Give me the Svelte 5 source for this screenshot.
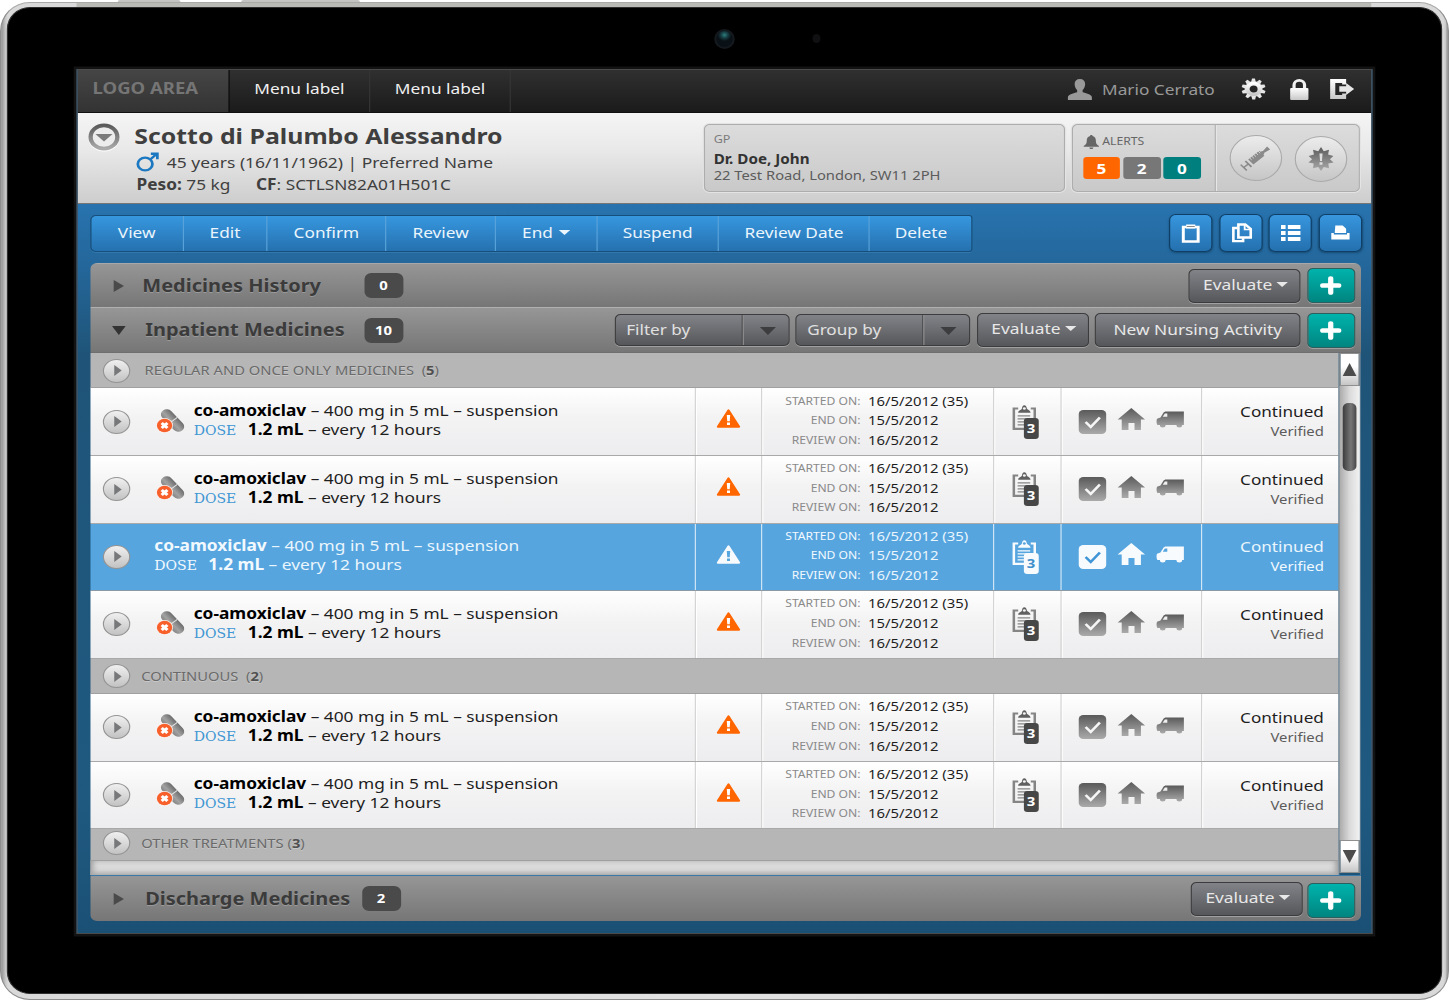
<script>
    const menu = ['Menu label', 'Menu label'];

    const actions = [
        {label: 'View', width: 81.2},
        {label: 'Edit', width: 73.5},
        {label: 'Confirm', width: 103.9},
        {label: 'Review', width: 96},
        {label: 'End', width: 88.6, caret: true},
        {label: 'Suspend', width: 106.8},
        {label: 'Review Date', width: 131.8},
        {label: 'Delete', width: 89.2},
    ];

    const alerts = [
        {count: 5, kind: 'high'},
        {count: 2, kind: 'medium'},
        {count: 0, kind: 'low'},
    ];

    const sections = [
        {title: 'REGULAR AND ONCE ONLY MEDICINES', gap: true, indent: true, count: 5, rows: [{}, {}, {selected: true}, {}]},
        {title: 'CONTINUOUS', gap: true, count: 2, rows: [{}, {}]},
        {title: 'OTHER TREATMENTS', count: 3, rows: []},
    ];

    const dates = [
        ['STARTED ON:', '16/5/2012 (35)'],
        ['END ON:', '15/5/2012'],
        ['REVIEW ON:', '16/5/2012'],
    ];
</script>

{#snippet caret()}
    <svg class="caret" width="10" height="5" viewBox="0 0 10 5"><path d="M0 0h10L5 5z"/></svg>
{/snippet}

{#snippet evaluate()}
    <button class="btn evaluate">Evaluate {@render caret()}</button>
{/snippet}

{#snippet add()}
    <button class="add" aria-label="Add">
        <svg width="19" height="19" viewBox="0 0 19 19"><path d="M9.5 2.5v14M2.5 9.5h14" stroke="#fff" stroke-width="4.6" stroke-linecap="round"/></svg>
    </button>
{/snippet}

{#snippet play()}
    <span class="play"><svg width="8" height="11" viewBox="0 0 8 11"><path d="M1 0l6.5 5.5L1 11z" fill="#77787a"/></svg></span>
{/snippet}

{#snippet select(label)}
    <div class="select">
        <span class="select-label">{label}</span>
        <span class="select-arrow"><svg width="14" height="8" viewBox="0 0 14 8"><path d="M0 0h14L7 8z" fill="#3d3d3f"/></svg></span>
    </div>
{/snippet}

<svg class="defs" width="0" height="0">
    <defs>
        <linearGradient id="grey" x1="0" y1="0" x2="0" y2="1">
            <stop offset="0" stop-color="#5a5a5a"/>
            <stop offset="1" stop-color="#aaa"/>
        </linearGradient>
        <linearGradient id="light" x1="0" y1="0" x2="0" y2="1">
            <stop offset="0" stop-color="#fff"/>
            <stop offset="1" stop-color="#c8c8c8"/>
        </linearGradient>
        <linearGradient id="pill" x1="0" y1="0" x2="1" y2="0">
            <stop offset="0" stop-color="#858585"/>
            <stop offset=".4" stop-color="#a2a2a2"/>
            <stop offset="1" stop-color="#6c6c6c"/>
        </linearGradient>
    </defs>
</svg>

<!-- laid out at 1268px and stretched sideways to fill the 1449px window -->
<div class="stage">
    <div class="keys"><i class="key power"></i><i class="key volume"></i></div>
    <div class="device">
        <div class="edge"></div>
        <div class="bezel">
            <i class="camera"></i>
            <i class="sensor"></i>
            <div class="screen">
                <nav>
                    <div class="logo">LOGO AREA</div>
                    {#each menu as item}
                        <div class="menu-item">{item}</div>
                    {/each}
                    <div class="user">
                        <svg width="22" height="21" viewBox="0 0 22 21"><path d="M11 0c3 0 4.600 2 4.600 5 0 2.600-1 4.800-2.200 6v2.200c2.800 1 7.600 1.800 8.100 4.800V21H.5v-3c.5-3 5.300-3.800 8.100-4.800V11C7.400 9.800 6.400 7.600 6.400 5c0-3 1.600-5 4.600-5z" fill="#999"/></svg>
                        <span>Mario Cerrato</span>
                    </div>
                    <svg class="gear" width="22" height="22" viewBox="0 0 22 22">
                        <circle cx="11" cy="11" r="5.600" fill="none" stroke="url(#light)" stroke-width="4.200"/>
                        <g fill="#e6e6e6">
                            {#each [0, 36, 72, 108, 144, 180, 216, 252, 288, 324] as a}
                                <path d="M9.600.5h2.600l.7 3.600H8.900z" transform="rotate({a} 11 11)"/>
                            {/each}
                        </g>
                    </svg>
                    <svg class="lock" width="16" height="21" viewBox="0 0 16 21">
                        <path d="M3.400 10V6a4.600 4.600 0 0 1 9.200 0v4" fill="none" stroke="#f2f2f2" stroke-width="2.800"/>
                        <rect y="9" width="16" height="12" rx="1" fill="url(#light)"/>
                    </svg>
                    <svg class="exit" width="21" height="20" viewBox="0 0 21 20">
                        <path d="M0 0h14v5.500h-3.500V4H4.500v12h6v-1.500H14V20H0z" fill="url(#light)"/>
                        <path d="M8 7.200h6V4l7 6-7 6v-3.200H8z" fill="#e6e6e6"/>
                    </svg>
                </nav>

                <header>
                    <svg class="toggle" width="28" height="29" viewBox="0 0 28 29">
                        <circle cx="14" cy="15" r="11.700" fill="none" stroke="#fff" stroke-width="3.800"/>
                        <circle cx="14" cy="14" r="11.700" fill="#ececec" stroke="url(#grey)" stroke-width="3.800"/>
                        <path d="M6.500 11h15L14 18.500z" fill="#7b7b7b"/>
                    </svg>
                    <div class="patient">
                        <h1>Scotto di Palumbo Alessandro</h1>
                        <p class="age">
                            <svg width="20" height="20" viewBox="0 0 20 20" fill="none" stroke="#1c78c0" stroke-width="2.400"><circle cx="8" cy="12" r="6.400"/><path d="M12.500 7.500L18 2M13 1.800h5.700v5.500"/></svg>
                            <span>45 years (16/11/1962) | Preferred Name</span>
                        </p>
                        <p class="ids"><b>Peso:</b> 75 kg <span class="cf"><b>CF</b>: SCTLSN82A01H501C</span></p>
                    </div>
                    <div class="box gp">
                        <span class="caption">GP</span>
                        <b>Dr. Doe, John</b>
                        <span>22 Test Road, London, SW11 2PH</span>
                    </div>
                    <div class="box alerts">
                        <div class="alert-list">
                            <div class="alert-title">
                                <svg width="14" height="14" viewBox="0 0 14 14"><path d="M7 0c.9 0 1.100.6 1.100 1.100C10.300 1.700 11 3.500 11 6c0 2.500.8 3.700 2.700 5v.8H.3V11C2.200 9.700 3 8.500 3 6c0-2.500.7-4.300 2.900-4.900C5.900.6 6.100 0 7 0zM5.300 12.400h3.400c0 1-.7 1.600-1.700 1.600s-1.700-.6-1.700-1.600z" fill="#666"/></svg>
                                ALERTS
                            </div>
                            <div class="counts">
                                {#each alerts as alert}
                                    <span class={alert.kind}>{alert.count}</span>
                                {/each}
                            </div>
                        </div>
                        <div class="rounds">
                            <span class="round">
                                <svg width="26" height="24" viewBox="0 0 26 24">
                                    <g transform="rotate(-42 13 12)" fill="#8a8a8a">
                                        <path d="M7 8.600h13v1.200l2 1V11l6-1v4l-6-1v.2l-2 1v1.200H7z"/>
                                        <path d="M-2 8h1.400v3.300h4V8H5v8H3.400v-3.300h-4V16H-2z"/>
                                        <path d="M9 8v3M11.500 8v3M14 8v3M16.500 8v3M19 8v3" stroke="#ddd" stroke-width=".8"/>
                                    </g>
                                </svg>
                            </span>
                            <span class="round second">
                                <svg width="24" height="24" viewBox="0 0 24 24">
                                    <path d="M12 0l2.400 4.300L19 2.800l-.8 4.600L22.800 9l-3 3.300 3.200 3.300-4.600 1 .6 4.700-4.600-1.300L12 24l-2.400-4-4.600 1.300.6-4.700-4.600-1 3.200-3.300-3-3.300 4.600-1.600L5 2.800l4.600 1.500z" fill="url(#grey)"/>
                                    <path d="M10.600 6.500h2.800l-.6 7.500h-1.600zM10.700 15.300h2.600v2.500h-2.600z" fill="#ddd"/>
                                </svg>
                            </span>
                        </div>
                    </div>
                </header>

                <main>
                    <div class="toolbar">
                        <div class="actions">
                            {#each actions as action}
                                <button style:width="{action.width}px">{action.label}{#if action.caret}{@render caret()}{/if}</button>
                            {/each}
                        </div>
                        <div class="tools">
                            <button aria-label="Paste">
                                <svg width="16" height="19" viewBox="0 0 16 19">
                                    <path d="M1.500 3h13v14.500h-13z" fill="none" stroke="#fff" stroke-width="2.600"/>
                                    <path d="M4 .5h8v4H4z" fill="#fff"/>
                                    <path d="M4.500 2.500h7" stroke="#8a8a8a"/>
                                </svg>
                            </button>
                            <button class="copy" aria-label="Copy">
                                <svg width="18" height="20" viewBox="0 0 18 20" fill="none" stroke="#fff" stroke-width="2.300">
                                    <path d="M4.500 5H1.300v13.200h8.500v-3"/>
                                    <path d="M5.700 1.500h6l4.800 4.500v8.500H5.700z"/>
                                    <path d="M11.200 2v4.500h5" stroke-width="1.600"/>
                                </svg>
                            </button>
                            <button aria-label="List">
                                <svg width="17" height="18" viewBox="0 0 17 18" fill="#fff">
                                    <path d="M0 1h4v4H0zM6 1h11v4H6zM0 7h4v4H0zM6 7h11v4H6zM0 13h4v4H0zM6 13h11v4H6z"/>
                                </svg>
                            </button>
                            <button aria-label="Print">
                                <svg width="16" height="16" viewBox="0 0 16 16" fill="#fff">
                                    <path d="M3.500.5H10l3 3.200V8H3z"/>
                                    <path d="M0 8h2.200v1.600h11.600V8H16v6.500H0z"/>
                                </svg>
                            </button>
                        </div>
                    </div>

                    <div class="panel">
                        <div class="bar">
                            <svg class="arrow" width="9" height="12" viewBox="0 0 9 12"><path d="M0 0l9 6-9 6z"/></svg>
                            <h2 class="history">Medicines History</h2>
                            <span class="count">0</span>
                            <div class="controls">
                                {@render evaluate()}
                                {@render add()}
                            </div>
                        </div>
                        <div class="bar open">
                            <svg class="arrow down" width="12" height="9" viewBox="0 0 12 9"><path d="M0 0h12L6 9z"/></svg>
                            <h2>Inpatient Medicines</h2>
                            <span class="count">10</span>
                            <div class="controls">
                                {@render select('Filter by')}
                                {@render select('Group by')}
                                {@render evaluate()}
                                <button class="btn nursing">New Nursing Activity</button>
                                {@render add()}
                            </div>
                        </div>

                        <div class="list">
                            <div class="table">
                                {#each sections as section}
                                    <div class="section" class:indent={section.indent} class:short={!section.rows.length}>
                                        {@render play()}
                                        <span>{section.title}{#if section.gap}&nbsp;{/if} (<b>{section.count}</b>)</span>
                                    </div>
                                    {#each section.rows as row}
                                        <div class="row" class:selected={row.selected}>
                                            <div class="cell medicine">
                                                {@render play()}
                                                {#if !row.selected}
                                                    <svg class="pills" width="24" height="26" viewBox="0 0 24 26">
                                                        <g transform="rotate(-40 14 12.500)">
                                                            <rect x="8.800" y="-.5" width="10.400" height="26" rx="5.200" fill="url(#pill)"/>
                                                            <path d="M8.800 12.800h10.400" stroke="#e4e4e4"/>
                                                        </g>
                                                        <circle cx="7" cy="17.500" r="7.400" fill="#f9f3f0"/>
                                                        <circle cx="7" cy="17.500" r="6.700" fill="#f8602b"/>
                                                        <path d="M4.500 15l5 5m0-5l-5 5" stroke="#fff" stroke-width="2.800"/>
                                                    </svg>
                                                {/if}
                                                <div class="drug">
                                                    <div><b>co-amoxiclav</b> – 400 mg in 5 mL – suspension</div>
                                                    <div><span class="dose">DOSE</span><b>1.2 mL</b> – every 12 hours</div>
                                                </div>
                                            </div>
                                            <div class="cell warning">
                                                <svg width="21" height="19" viewBox="0 0 21 19">
                                                    <path class="tri" d="M10.500 1.200L19.800 17.800H1.200z" stroke-width="1.800" stroke-linejoin="round"/>
                                                    <path class="bang" d="M9 6h3l-.4 6.300H9.400zM9.200 13.500h2.600v2.600H9.200z"/>
                                                </svg>
                                            </div>
                                            <div class="cell dates">
                                                {#each dates as [label, value]}
                                                    <span class="label">{label}</span><span>{value}</span>
                                                {/each}
                                            </div>
                                            <div class="cell notes">
                                                <div class="clipboard">
                                                    <svg width="21" height="26" viewBox="0 0 21 26">
                                                        <path class="line" d="M5 3.500H1.200v20.300h18.300V3.500H16" fill="none" stroke-width="2.200"/>
                                                        <path class="ink" d="M5 7.800c0-2.300 2.500-2.600 3.200-4C8.600 1.400 9.200.3 10.400.3s1.800 1.100 2.200 3.200c.7 1.400 3.200 2 3.200 4.300z"/>
                                                        <circle class="hole" cx="10.400" cy="3.500" r="1.300"/>
                                                        <path class="line" d="M4.500 10.800h11M4.500 13.800h12M4.500 16.800h7M4.500 19.800h6" stroke-width="1.300"/>
                                                    </svg>
                                                    <span class="note-count">3</span>
                                                </div>
                                            </div>
                                            <div class="cell flags">
                                                <svg width="24" height="24" viewBox="0 0 24 24">
                                                    <rect class="ink" width="24" height="24" rx="4"/>
                                                    <path class="tick" d="M6 12l4.500 5L18.500 7.500" fill="none" stroke-width="2.400"/>
                                                </svg>
                                                <svg class="house" width="24" height="22" viewBox="0 0 24 22"><path class="ink" d="M12 0l12 11.500h-3.600V22h-5.600v-7H9.500v7H3.600V11.500H0z"/></svg>
                                                <svg class="van" width="24" height="17" viewBox="0 0 24 17">
                                                    <path class="ink" d="M8.500.5H24V14h-1.500a2.500 2.500 0 0 1-5 0H8a2.500 2.500 0 0 1-5 0H.8c-.9-2-.9-4.500-.3-6.200L3.500 6.500 6 2C6.500 1 7.500.5 8.500.5z"/>
                                                    <path class="glass" d="M7.300 2.500h2.200v3.300H5.500z"/>
                                                </svg>
                                            </div>
                                            <div class="cell status">
                                                <span>Continued</span>
                                                <small>Verified</small>
                                            </div>
                                        </div>
                                    {/each}
                                {/each}
                                <div class="rest"></div>
                            </div>
                            <div class="scrollbar">
                                <div class="step"><svg width="12" height="13" viewBox="0 0 12 13"><path d="M6 0l6 13H0z" fill="#4c4c4c"/></svg></div>
                                <div class="track"><div class="thumb"></div></div>
                                <div class="step bottom"><svg width="12" height="13" viewBox="0 0 12 13"><path d="M0 0h12L6 13z" fill="#4c4c4c"/></svg></div>
                            </div>
                        </div>

                        <div class="bar last">
                            <svg class="arrow" width="9" height="12" viewBox="0 0 9 12"><path d="M0 0l9 6-9 6z"/></svg>
                            <h2 class="discharge">Discharge Medicines</h2>
                            <span class="count">2</span>
                            <div class="controls">
                                {@render evaluate()}
                                {@render add()}
                            </div>
                        </div>
                    </div>
                </main>
            </div>
        </div>
    </div>
</div>

<style>
    :global(body) {
        background: #fff;
        overflow: hidden;
    }

    .stage {
        width: 1268px;
        height: 1000px;
        transform: scaleX(1.14274);
        transform-origin: 0 0;
        font-family: "Noto Sans", "Open Sans", sans-serif;
        font-size: 15px;
        line-height: 19px;
        color: #222;
        overflow: hidden;
    }

    .stage * {
        box-sizing: border-box;
    }

    .defs {
        position: absolute;
    }

    svg {
        display: block;
        flex: none;
        overflow: visible;
    }

    h1, h2, p {
        margin: 0;
    }

    button {
        font: inherit;
        padding: 0;
        margin: 0;
        display: flex;
        align-items: center;
        justify-content: center;
    }

    /* tablet */
    .keys {
        display: flex;
        height: 2px;
        padding-left: 103px;
        gap: 53px;
    }

    .key {
        background: #c4c4c2;
        width: 55px;
        height: 2px;
        border-radius: 2px 2px 0 0;
    }

    .volume {
        width: 104px;
    }

    .device {
        height: 998px;
        padding: 5px 6px 6px 5px;
        border: 1px solid #8d8d8d;
        border-top-color: #a9a9a7;
        border-radius: 26px / 29px;
        background: linear-gradient(90deg, #909090, #c9c9c9 4px, #d9d9d9 6px, #e2e2e2 50%, #d9d9d9 1262px, #c9c9c9 1264px, #858585);
        position: relative;
    }

    .edge {
        position: absolute;
        top: 0;
        left: 66px;
        right: 67px;
        height: 6px;
        background: #b9bab5;
    }

    .bezel {
        position: relative;
        height: 987px;
        margin-top: -1px;
        margin-right: -1px;
        padding: 61px 60px 0 59.500px;
        background: #000;
        border: 1px solid #2e2e2e;
        border-radius: 20px / 22px;
    }

    .camera {
        position: absolute;
        left: 618px;
        top: 21px;
        width: 18px;
        height: 20px;
        border-radius: 50%;
        border: 2px solid #14191e;
        background: radial-gradient(circle at 50% 25%, #2b7f7c 0, #173d44 3px, #0a1116 6px);
    }

    .sensor {
        position: absolute;
        left: 704px;
        top: 26px;
        width: 7px;
        height: 9px;
        border-radius: 50%;
        background: #101012;
    }

    .screen {
        width: 1134px;
        height: 865px;
        border: 1px solid #4a4a4a;
        box-shadow: 0 0 0 2.500px #131313;
        background: #286fab;
        overflow: hidden;
    }

    /* top navigation */
    nav {
        display: flex;
        align-items: center;
        height: 43px;
        padding-right: 15px;
        background: linear-gradient(#303030, #1b1b1b);
        border-bottom: 1px solid #111;
        color: #f0f0f0;
    }

    .logo, .menu-item {
        height: 42px;
        display: flex;
        align-items: center;
        padding-bottom: 5px;
    }

    .logo {
        width: 133.500px;
        padding-left: 13.500px;
        background: linear-gradient(#454545, #333);
        border-right: 1px solid #0c0c0c;
        color: #757575;
        font-weight: bold;
        font-size: 16.200px;
    }

    .menu-item {
        width: 123px;
        justify-content: center;
        border-right: 1px solid #363636;
        font-size: 15.150px;
    }

    .user {
        display: flex;
        align-items: center;
        gap: 8px;
        margin-left: auto;
        margin-right: 23px;
        color: #999;
        padding-bottom: 4px;
        font-size: 15.100px;
    }

    .gear {
        margin-right: 20.500px;
    }

    .lock {
        margin-right: 19px;
    }

    .gear, .lock, .exit {
        margin-bottom: 4px;
    }

    /* patient header */
    header {
        display: flex;
        height: 91px;
        padding: 11px 10px 0 9.500px;
        background: linear-gradient(#f5f5f5, #e9e9e9 40%, #cdcdcd);
        border-bottom: 1px solid #777;
        color: #3f3f3f;
    }

    .toggle {
        margin-top: -1px;
    }

    .patient {
        flex: 1;
        padding-left: 12.500px;
    }

    h1 {
        font-size: 21.750px;
        line-height: 26px;
        margin-top: -1px;
    }

    .age {
        display: flex;
        align-items: center;
        gap: 7.500px;
        height: 24px;
        padding-left: 1px;
        margin-top: 1px;
        font-size: 15.250px;
    }

    .ids {
        padding-left: 2px;
        margin-top: 0;
        line-height: 20px;
        font-size: 15.100px;
    }

    .cf {
        margin-left: 18.500px;
    }

    .box {
        height: 68px;
        border: 1px solid #adadad;
        border-radius: 5px;
        background: linear-gradient(#dcdcdc, #c9c9c9);
        box-shadow: 0 0 0 1px #e4e4e4;
    }

    .gp {
        width: 316px;
        margin-right: 6px;
        padding: 6px 8px;
        display: flex;
        flex-direction: column;
        font-size: 12.900px;
        line-height: 16px;
        color: #5c5c5c;
    }

    .gp b {
        margin-top: 4px;
        color: #333;
        font-size: 13.300px;
    }

    .caption {
        font-size: 11px;
        color: #7c7c7c;
    }

    .alerts {
        width: 252px;
        display: flex;
    }

    .alert-list {
        width: 125.500px;
        padding: 9px 0 0 9px;
        border-right: 1px solid #b2b2b2;
        box-shadow: 1px 0 0 #e6e6e6;
    }

    .alert-title {
        display: flex;
        align-items: center;
        gap: 3px;
        height: 15px;
        font-size: 10.700px;
        color: #666;
    }

    .counts {
        display: flex;
        gap: 2.300px;
        margin-top: 8px;
    }

    .counts span {
        width: 32.900px;
        height: 22px;
        border-radius: 3px;
        color: #fff;
        font-weight: bold;
        font-size: 15px;
        line-height: 22px;
        text-align: center;
    }

    .high {
        background: #ff6600;
    }

    .medium {
        background: #777;
    }

    .low {
        background: #007f7f;
    }

    .rounds {
        display: flex;
        gap: 10.500px;
        padding: 10px 0 0 12px;
    }

    .round {
        width: 46px;
        height: 46px;
        border: 1px solid #aaa;
        border-radius: 50%;
        background: linear-gradient(#ececec, #c6c6c6);
        display: flex;
        align-items: center;
        justify-content: center;
    }

    .second {
        margin-top: 1px;
    }

    /* blue work area */
    main {
        height: 730px;
        padding: 11px 8.500px 0 11px;
        background: linear-gradient(#2873af, #24679b 60px, #1f5478 150px, #1f5980 600px, #1b5075);
    }

    .toolbar {
        display: flex;
        justify-content: space-between;
        height: 37px;
    }

    .actions {
        display: flex;
        height: 37px;
        border: 1px solid #174f7c;
        border-radius: 5px 3px 3px 5px;
        background: linear-gradient(#3797df, #2571af);
        box-shadow: 0 1px 0 #3378ad;
        overflow: hidden;
    }

    .actions button {
        border: 0;
        border-right: 1px solid #5aa3db;
        background: none;
        color: #eaf5fd;
        padding-bottom: 2px;
        gap: 5px;
        font-size: 15.100px;
    }

    .actions button:last-child {
        border-right: 0;
    }

    .tools {
        display: flex;
        gap: 5.600px;
        margin-top: -1px;
        margin-right: -1px;
    }

    .tools button {
        width: 38px;
        height: 38px;
        border: 1px solid #0f3f66;
        border-radius: 6px;
        background: linear-gradient(#3896de, #2470ae);
        box-shadow: 0 1px 2px #174a72;
    }

    .tools .copy {
        padding-left: 2px;
    }

    .caret {
        fill: currentColor;
    }

    .panel {
        margin-top: 11px;
        width: 1112.500px;
        border-radius: 6px;
        overflow: hidden;
    }

    .bar {
        display: flex;
        align-items: center;
        height: 44px;
        padding: 0 5.500px 0 19px;
        background: linear-gradient(#969696, #767676);
        border-top: 1px solid #a8a8a8;
        color: #3b3b3b;
    }

    .open {
        height: 46px;
        border-top-color: #b0b0b0;
        border-bottom: 1px solid #6f6f6f;
    }

    .arrow {
        fill: #4a4a4a;
        width: 12px;
    }

    .down {
        fill: #333;
    }

    h2 {
        width: 191.500px;
        margin-left: 17.500px;
        padding-bottom: 2px;
        font-size: 17.500px;
        line-height: 24px;
        white-space: nowrap;
        text-shadow: 0 1px 0 #9a9a9a;
    }

    .history {
        margin-left: 15px;
        width: 194px;
    }

    .discharge {
        width: 189.500px;
    }

    .count {
        width: 34px;
        height: 25px;
        border-radius: 6px;
        background: #4a4a4a;
        color: #fff;
        font-size: 13px;
        font-weight: bold;
        line-height: 24px;
        text-align: center;
    }

    .controls {
        display: flex;
        align-items: center;
        margin-left: auto;
        gap: 5.400px;
    }

    .btn {
        height: 34px;
        border: 1px solid #3c3c3e;
        border-radius: 5px;
        background: linear-gradient(#828388, #56575b);
        box-shadow: 0 1px 0 #a0a0a0;
        color: #e8e8e8;
        padding-bottom: 2px;
    }

    .evaluate {
        width: 98px;
        font-size: 15.200px;
        gap: 4px;
        padding-bottom: 3px;
        padding-left: 2px;
    }

    .nursing {
        width: 180px;
        font-size: 15.150px;
    }

    .select {
        display: flex;
        width: 153px;
        height: 32px;
        border: 1px solid #3c3c3e;
        border-radius: 5px;
        background: linear-gradient(#828388, #56575b);
        box-shadow: 0 1px 0 #a0a0a0;
        color: #e0e0e0;
    }

    .select-label {
        width: 112px;
        padding-left: 9px;
        line-height: 29px;
        border-right: 1px solid #8c8c8e;
        box-shadow: inset -1px 0 0 #4a4a4c;
    }

    .select-arrow {
        padding: 12px 0 0 14px;
    }

    .add {
        width: 42px;
        height: 35px;
        border: 1px solid #2c5f5d;
        border-radius: 5px;
        background: linear-gradient(#00b3ac, #008580);
        box-shadow: 0 1px 0 #a0a0a0;
    }

    /* medicines list */
    .list {
        display: flex;
        height: 522px;
        border-right: 1px solid #55768e;
    }

    .table {
        width: 1093.500px;
        border-right: 1px solid #8d9aa3;
        display: flex;
        flex-direction: column;
    }

    .section {
        display: flex;
        align-items: center;
        height: 35.400px;
        flex: none;
        padding: 1px 0 0 11px;
        background: #b6b6b6;
        border-bottom: 1px solid #a0a0a0;
        color: #6a6a6a;
        font-size: 12.900px;
        text-shadow: 0 1px 0 #c8c8c8;
    }

    .section > span:last-child {
        margin-left: 10px;
    }

    .section.indent > span:last-child {
        margin-left: 13px;
    }

    .section.short {
        height: 32px;
        padding-top: 0;
        padding-bottom: 3px;
    }

    .section b {
        color: #505050;
    }

    .play {
        width: 24px;
        height: 24px;
        flex: none;
        border: 1px solid #949494;
        border-radius: 50%;
        background: linear-gradient(#f0f0f0, #c2c2c2);
        display: flex;
        align-items: center;
        justify-content: center;
        padding-left: 2px;
    }

    .row {
        display: flex;
        height: 67.600px;
        flex: none;
        background: linear-gradient(#fff, #f4f3f4 45%, #edecee);
        border-bottom: 1px solid #a9a9a9;
        color: #1e1e1e;
    }

    .cell {
        border-right: 1px solid #d3d3d3;
        display: flex;
        align-items: center;
        flex: none;
        box-shadow: 1px 0 0 #fff;
    }

    .cell:last-child {
        border-right: 0;
        box-shadow: none;
    }

    .medicine {
        width: 530px;
        padding-left: 11px;
    }

    .pills {
        margin-left: 23.500px;
        margin-bottom: 2px;
    }

    .drug {
        margin-left: 8.500px;
        padding-bottom: 1.500px;
        font-size: 15.150px;
    }

    .drug b {
        color: #000;
    }

    .dose {
        font-family: "DejaVu Serif", serif;
        font-size: 12.300px;
        color: #3f97d3;
        margin-right: 10px;
    }

    .warning {
        width: 58.500px;
        justify-content: center;
        padding-bottom: 5.500px;
    }

    .tri {
        fill: #ff6600;
        stroke: #ff6600;
    }

    .bang {
        fill: #fff;
    }

    .dates {
        width: 203px;
        display: grid;
        grid-template-columns: 86px 1fr;
        grid-auto-rows: 19.600px;
        column-gap: 6.500px;
        align-content: start;
        align-items: center;
        padding-top: 3px;
        font-size: 13px;
    }

    .label {
        text-align: right;
        font-size: 10.600px;
        color: #8a8a8a;
    }

    .notes {
        width: 58.500px;
        padding-left: 16px;
    }

    .clipboard {
        position: relative;
        width: 23px;
        height: 34px;
    }

    .line {
        stroke: #858585;
    }

    .clipboard .ink {
        fill: #606060;
    }

    .hole {
        fill: #f4f4f4;
    }

    .note-count {
        position: absolute;
        left: 9.500px;
        top: 13px;
        width: 13.500px;
        height: 21px;
        border-radius: 3px;
        background: #474747;
        color: #fff;
        font-size: 13px;
        font-weight: bold;
        line-height: 20px;
        text-align: center;
    }

    .flags {
        width: 123.500px;
        padding: 0 0 0 15.500px;
        gap: 10px;
    }

    .ink {
        fill: url(#grey);
    }

    .tick {
        stroke: #f6f6f6;
    }

    .glass {
        fill: #f0f0f0;
    }

    .house {
        margin-bottom: 5px;
    }

    .van {
        margin-bottom: 4px;
    }

    .status {
        flex: 1;
        flex-direction: column;
        align-items: flex-end;
        justify-content: center;
        padding-right: 12.500px;
        padding-bottom: 1px;
    }

    .status span {
        line-height: 20px;
    }

    .status small {
        font-size: 13px;
        line-height: 20px;
        color: #5c5c5c;
    }

    .selected {
        background: #56a5df;
        color: #eaf5fc;
        border-bottom-color: #8b9aa5;
    }

    .selected .drug {
        margin-left: 21.500px;
    }

    .selected .drug b, .selected .dose, .selected .label, .selected small {
        color: #f2f9fe;
    }

    .selected .cell {
        border-right-color: #d5e8f6;
        box-shadow: none;
    }

    .selected .tri {
        fill: #f6fafd;
        stroke: #f6fafd;
    }

    .selected .bang, .selected .glass, .selected .hole {
        fill: #56a5df;
    }

    .selected .ink, .selected .clipboard .ink {
        fill: #f8fbfe;
    }

    .selected .tick {
        stroke: #3f95d5;
    }

    .selected .line {
        stroke: #f8fbfe;
    }

    .selected .note-count {
        background: #f8fbfe;
        color: #3f8fca;
    }

    .rest {
        flex: 1;
        background: #dadada;
        box-shadow: inset 0 -4px 5px -2px #aaa, inset 5px 0 6px -3px #999, inset -5px 0 6px -3px #999;
    }

    .scrollbar {
        flex: 1;
        display: flex;
        flex-direction: column;
    }

    .step {
        height: 33px;
        display: flex;
        align-items: center;
        justify-content: center;
        background: linear-gradient(#fff 40%, #c6c6c6);
        border: 1px solid #8f8f8f;
    }

    .bottom {
        margin-bottom: 2px;
    }

    .track {
        flex: 1;
        background: linear-gradient(90deg, #a9a9a9, #dadada 50%, #f2f2f2);
        padding: 17px 0 0 2.500px;
    }

    .thumb {
        width: 12px;
        height: 68px;
        border-radius: 5px;
        background: linear-gradient(90deg, #3c3c3c, #777 60%, #484848);
    }

    .last {
        height: 46px;
        border-top: 1px solid #3a78a8;
    }

    .last .add {
        margin-top: 3px;
        margin-left: -2px;
    }
</style>
